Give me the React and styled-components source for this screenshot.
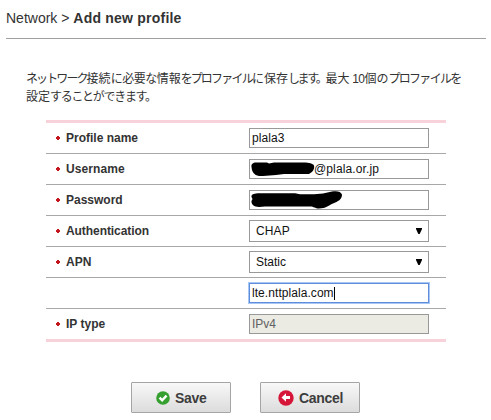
import React from "react";
import styled, { createGlobalStyle } from "styled-components";

const GlobalStyle = createGlobalStyle`
  * { box-sizing: border-box; }
  body {
    margin: 0;
    background: #fff;
    color: #333;
    font-family: "Liberation Sans", "Noto Sans CJK JP", sans-serif;
    font-size: 12px;
    overflow: hidden;
  }
`;

const Page = styled.main`
  width: 491px;
  height: 420px;
  padding-left: 6px;
`;

const Breadcrumb = styled.h1`
  width: 480px;
  height: 39px;
  margin: 0;
  padding-top: 10px;
  border-bottom: 1px solid #a0a0a0;
  font-size: 14px;
  line-height: 16px;
  font-weight: 400;
  white-space: pre;
`;

const Current = styled.strong`
  letter-spacing: 0.22px;
`;

const Intro = styled.div`
  height: 81px;
  padding: 31px 0 0 20px;
  line-height: 18px;
  white-space: pre;
`;

const Line = styled.p`
  margin: 0;
`;

const Phrase = styled.span`
  letter-spacing: ${(p) => p.$spacing}px;
`;

const Form = styled.div`
  width: 400px;
  margin-left: 40px;
  border-top: 3px solid #f7d2da;
  border-bottom: 3px solid #f7d2da;
`;

const Row = styled.div`
  display: grid;
  grid-template-columns: 203px 180px;
  align-items: center;
  height: 31px;
  border-bottom: 1px solid #a8a8a8;
  &:last-child { height: 30px; border-bottom: 0; }
`;

const Label = styled.label`
  display: flex;
  align-items: center;
  gap: 6px;
  padding-left: 10px;
  font-weight: 700;
  line-height: 14px;
  letter-spacing: ${(p) => p.$spacing || "0"};
`;

const Dot = styled.svg`
  width: 4px;
  height: 4px;
`;

const Field = styled.div`
  display: flex;
  align-items: center;
  height: 20px;
  padding: 0 2px;
  border: 1px solid ${(p) => (p.$focused ? "#608ddb" : "#999")};
  background: ${(p) => (p.$disabled ? "#ebebe4" : "#fff")};
  box-shadow: ${(p) => (p.$focused ? "0 0 0 1px #a9c7f5" : "none")};
  color: ${(p) => (p.$disabled ? "#606060" : "#111")};
  line-height: 14px;
  letter-spacing: ${(p) => p.$spacing || "0"};
`;

const Select = styled(Field)`
  height: 22px;
  padding: 0 6px;
  justify-content: space-between;
`;

const Caret = styled.span`
  width: 1px;
  height: 13px;
  background: #000;
`;

const Arrow = styled.svg`
  width: 6px;
  height: 6px;
`;

const Redaction = styled.svg`
  flex: none;
  width: ${(p) => p.$width}px;
  height: 18px;
  margin-left: -1px;
  overflow: visible;
`;

const Actions = styled.div`
  display: flex;
  gap: 29px;
  padding: 40px 0 0 125px;
`;

const Button = styled.button`
  display: flex;
  align-items: center;
  width: 100px;
  height: 31px;
  padding: 0 0 0 ${(p) => p.$inset}px;
  gap: 5px;
  border: 1px solid #a5a5a5;
  border-radius: 1px;
  background: linear-gradient(#f8f8f8, #dcdcdc);
  color: #3d3d3d;
  font: 700 14px "Liberation Sans", sans-serif;
  svg { flex: none; }
`;

const ButtonText = styled.span`
  letter-spacing: -0.3px;
`;

const introPhrases = [
  ["ネットワーク", -1.9],
  ["接続", 0],
  ["に必要な", -0.5],
  ["情報", 0],
  ["を", -2],
  ["プロファイル", -1.8],
  ["に", 0],
  ["保存", 0],
  ["します。", -2.3],
  ["最大", 0],
  [" 10", -0.6],
  ["個の", 0],
  ["プロファイル", -1.7],
  ["を", 0],
];

function RowLabel({ children, spacing }) {
  return (
    <Label $spacing={spacing}>
      <Dot viewBox="0 0 4 4"><path d="M1 0h2v1h1v2H3v1H1V3H0V1h1z" fill="#c4161c" /></Dot>
      {children}
    </Label>
  );
}

function DownArrow() {
  return <Arrow viewBox="0 0 6 6"><path d="M0 0h6v1L3.7 6H2.3L0 1z" fill="#000" /></Arrow>;
}

export default function App() {
  return (
    <>
      <GlobalStyle />
      <Page>
        <Breadcrumb>Network &gt; <Current>Add new profile</Current></Breadcrumb>
        <Intro>
          <Line>
            {introPhrases.map(([text, spacing], i) => (
              <Phrase key={i} $spacing={spacing}>{text}</Phrase>
            ))}
          </Line>
          <Line>
            <Phrase $spacing={0}>設定</Phrase>
            <Phrase $spacing={-1.3}>することができます。</Phrase>
          </Line>
        </Intro>
        <Form>
          <Row><RowLabel>Profile name</RowLabel><Field $spacing="0.1px">plala3</Field></Row>
          <Row>
            <RowLabel spacing="0.1px">Username</RowLabel>
            <Field $spacing="0.13px">
              <Redaction $width={63} viewBox="0 0 63 18">
                <path d="M.5 7C0 4 2 2.5 5 2.5h11l2 1 5-1h30c5 0 9 1 10 3 1 4-2 7-5 8.500H33L25 15 12 16H8C3 15 1 12 .5 7z" fill="#000" />
              </Redaction>
              @plala.or.jp
            </Field>
          </Row>
          <Row>
            <RowLabel>Password</RowLabel>
            <Field>
              <Redaction $width={91} viewBox="0 0 91 18">
                <path d="M.5 6C0 3 4 2.300 8 2.300h36l5 1h14l9-.8 9-2c5-1 9 0 10 3 0 5-4 7-9 9-5 2-7 5-14 5-4 0-5-2-9-2H14L8 16C3 16 0 13 .5 10l1-2z" fill="#000" />
              </Redaction>
            </Field>
          </Row>
          <Row><RowLabel spacing="-0.07px">Authentication</RowLabel><Select $spacing="0.1px">CHAP<DownArrow /></Select></Row>
          <Row><RowLabel>APN</RowLabel><Select>Static<DownArrow /></Select></Row>
          <Row><span /><Field $focused $spacing="0.06px">lte.nttplala.com<Caret /></Field></Row>
          <Row><RowLabel>IP type</RowLabel><Field $disabled>IPv4</Field></Row>
        </Form>
        <Actions>
          <Button $inset={24}>
            <svg width="14" height="14" viewBox="0 0 15 15">
              <circle cx="7.5" cy="7.5" r="7.300" fill="#35a02f" />
              <path d="M3.800 7 6.600 9.900l4.700-5" fill="none" stroke="#fff" strokeWidth="2.600" />
            </svg>
            <ButtonText>Save</ButtonText>
          </Button>
          <Button $inset={17}>
            <svg width="16" height="16" viewBox="0 0 16 16">
              <circle cx="8" cy="8" r="7.700" fill="#d51638" />
              <path d="M3.500 7.500 8 3.300v2.800h4v2.800H8v2.800z" fill="#fff" />
            </svg>
            <ButtonText>Cancel</ButtonText>
          </Button>
        </Actions>
      </Page>
    </>
  );
}
